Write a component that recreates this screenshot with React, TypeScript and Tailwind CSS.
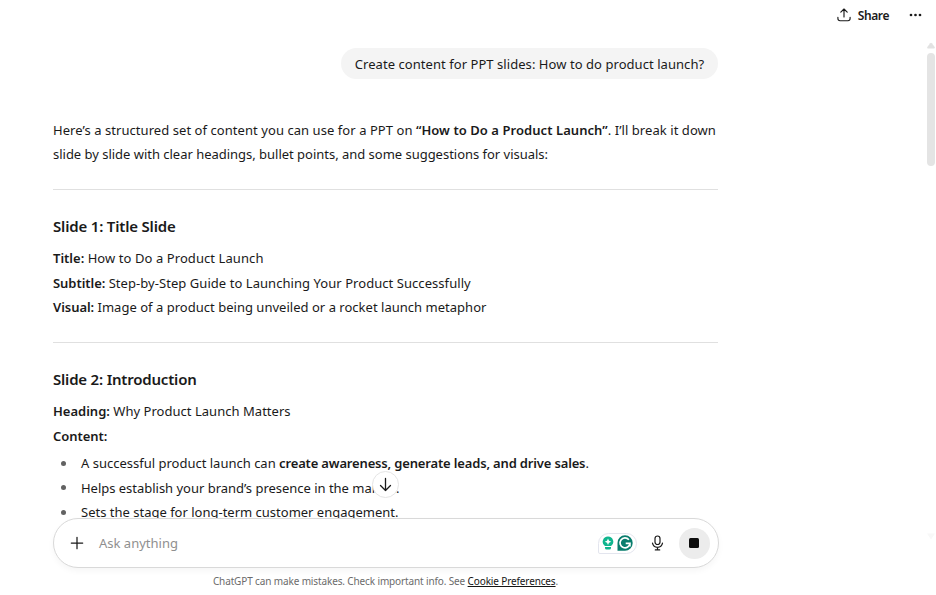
import type { ReactNode } from "react";

function Line({ children, className = "" }: { children: ReactNode; className?: string }) {
  return <div className={`h-[24.3px] whitespace-nowrap leading-[24.3px] ${className}`}>{children}</div>;
}

function B({ children, className = "" }: { children: ReactNode; className?: string }) {
  return <strong className={`font-semibold ${className}`}>{children}</strong>;
}

function Bullet({ children, className = "" }: { children: ReactNode; className?: string }) {
  return (
    <li className="flex h-[24.3px] items-center whitespace-nowrap leading-[24.3px]">
      <span className="ml-[8px] mr-[15px] size-[5px] shrink-0 rounded-full bg-[#626262]" />
      <span className={className}>{children}</span>
    </li>
  );
}

function Header() {
  return (
    <header className="flex h-[30px] shrink-0 items-center justify-end pr-[13px]">
      <button className="flex items-center text-[12px] font-semibold tracking-[-0.4px]">
        <svg className="mr-[7px]" width="14" height="14" viewBox="0 0 14 14" fill="none" stroke="currentColor" strokeWidth="1.15" strokeLinecap="round" strokeLinejoin="round">
          <path d="M7 9V1M3.8 4.2 7 1l3.2 3.2M.9 9.3v1.2c0 1.4.8 2.2 2.2 2.2h7.8c1.4 0 2.2-.8 2.2-2.2V9.3" />
        </svg>
        <span className="pt-px">Share</span>
      </button>
      <svg className="ml-[19px]" width="15" height="14" viewBox="0 0 15 14" fill="currentColor">
        <circle cx="3" cy="7" r="1.35" />
        <circle cx="7.5" cy="7" r="1.35" />
        <circle cx="12" cy="7" r="1.35" />
      </svg>
    </header>
  );
}

function Composer() {
  return (
    <div className="flex h-[50px] w-[666px] items-center rounded-full border border-[#d9d9d9] bg-white pl-[16px] pr-[8px] shadow-[0_3px_6px_rgba(0,0,0,0.04)]">
      <svg width="14" height="14" viewBox="0 0 14 14" fill="none" stroke="currentColor" strokeWidth="1.25" strokeLinecap="round">
        <path d="M7 1.3v11.4M1.3 7h11.4" />
      </svg>
      <span className="ml-[15.5px] pt-[2px] text-[13px] text-[#8f8f8f]">Ask anything</span>
      <div className="ml-auto flex h-[21px] w-[39px] items-center justify-center gap-[3px] rounded-[11px] rounded-bl-[2px] border border-[#e3e5ee]">
        <svg width="12" height="14" viewBox="0 0 12 14">
          <path fill="#0fb58e" d="M6 .5a5.3 5.3 0 0 0-3.1 9.6h6.2A5.3 5.3 0 0 0 6 .5M3 11h6v1q0 1.6-1.6 1.6H4.6Q3 13.6 3 12z" />
          <path fill="#fff" d="m6 2.4 1 2.3 2.3 1-2.3 1L6 9 5 6.7l-2.3-1 2.3-1z" />
        </svg>
        <svg width="16" height="16" viewBox="0 0 16 16">
          <path fill="#087d6d" d="M8 .3a7.7 7.7 0 1 1 0 15.4H.5V8A7.6 7.6 0 0 1 8 .3" />
          <path fill="none" stroke="#fff" strokeWidth="1.7" d="M11.9 4.7A5 5 0 1 0 13 8.3H8.7M12.9 8.3v3.2" />
        </svg>
      </div>
      <svg className="ml-[14px]" width="13" height="16" viewBox="0 0 13 16" fill="none" stroke="currentColor" strokeWidth="1.2" strokeLinecap="round">
        <rect x="4" y="1" width="5" height="8.5" rx="2.5" />
        <path d="M1.5 8.2a5.1 5.1 0 0 0 10 0M6.5 12.3v2.5M4.3 14.9h4.4" />
      </svg>
      <button aria-label="Stop" className="ml-[15px] flex size-[31px] items-center justify-center rounded-full bg-[#ececec]">
        <span className="size-[10px] rounded-[1.5px] bg-[#0d0d0d]" />
      </button>
    </div>
  );
}

export default function App() {
  return (
    <div className="relative flex h-[595px] w-[936px] flex-col overflow-hidden bg-white font-['Noto_Sans',sans-serif] text-[13px] text-[#1a1a1a]">
      <Header />
      <main className="h-[488px] shrink-0 overflow-hidden pl-[53px]">
        <div className="w-[665px]">
          <div className="mt-[18px] flex justify-end">
            <div className="flex h-[31px] w-[377px] items-center justify-center whitespace-nowrap rounded-full bg-[#f4f4f4]">
              <span className="pt-[2px] tracking-[0.055px]">Create content for PPT slides: How to do product launch?</span>
            </div>
          </div>
          <div className="mt-[38.7px]">
            <Line className="tracking-[0.06px]">Here’s a structured set of content you can use for a PPT on <B>“How to Do a Product Launch”</B>. I’ll break it down</Line>
            <Line className="tracking-[-0.02px]">slide by slide with clear headings, bullet points, and some suggestions for visuals:</Line>
          </div>
          <hr className="mt-[22.7px] border-[#e0e0e0]" />
          <h3 className="mt-[24px] h-[24px] whitespace-nowrap text-[15px] font-semibold leading-[24px] tracking-[-0.18px]">Slide 1: Title Slide</h3>
          <div className="mt-[8.4px]">
            <Line><B>Title:</B> <span className="tracking-[0.08px]">How to Do a Product Launch</span></Line>
            <Line><B className="tracking-[-0.05px]">Subtitle:</B> <span className="tracking-[0.055px]">Step-by-Step Guide to Launching Your Product Successfully</span></Line>
            <Line><B className="tracking-[-0.05px]">Visual:</B> <span className="tracking-[0.02px]">Image of a product being unveiled or a rocket launch metaphor</span></Line>
          </div>
          <hr className="mt-[23.2px] border-[#e0e0e0]" />
          <h3 className="mt-[24px] h-[24px] whitespace-nowrap text-[15px] font-semibold leading-[24px] tracking-[-0.2px]">Slide 2: Introduction</h3>
          <div className="mt-[8px]">
            <Line><B>Heading:</B> <span className="tracking-[0.03px]">Why Product Launch Matters</span></Line>
            <Line><B className="tracking-[-0.05px]">Content:</B></Line>
          </div>
          <ul className="mt-[3.4px]">
            <Bullet><span>A successful product launch can </span><B className="tracking-[-0.16px]">create awareness, generate leads, and drive sales</B>.</Bullet>
            <Bullet className="tracking-[-0.02px]">Helps establish your brand’s presence in the market.</Bullet>
            <Bullet>Sets the stage for long-term customer engagement.</Bullet>
          </ul>
        </div>
      </main>
      <footer className="flex w-[771px] flex-col items-center">
        <Composer />
        <p className="mt-[5px] whitespace-nowrap text-[10px] leading-[16px] tracking-[-0.13px] text-[#6b6b6b]">
          ChatGPT can make mistakes. Check important info. See <span className="text-[#151515] underline">Cookie Preferences</span>.
        </p>
      </footer>
      <button aria-label="Scroll to bottom" className="absolute left-[372px] top-[471px] flex size-[27px] items-center justify-center rounded-full border border-[#e5e5e5] bg-white">
        <svg width="13" height="15" viewBox="0 0 13 15" fill="none" stroke="currentColor" strokeWidth="1.3" strokeLinecap="round" strokeLinejoin="round">
          <path d="M6.5 1.5v12M1.5 8.5l5 5 5-5" />
        </svg>
      </button>
      <div className="absolute right-0 top-[42px] flex h-[498px] w-[10px] flex-col items-center">
        <svg width="8" height="7" viewBox="0 0 8 7" fill="#e2e2e2"><path d="M3.2 1.2q.8-1 1.6 0L7.7 5q.6 1.4-.7 1.5H1Q-.3 6.4.3 5z" /></svg>
        <div className="mt-[4px] h-[113px] w-[8px] rounded-full bg-[#e4e4e4]" />
        <svg className="mt-auto" width="8" height="7" viewBox="0 0 8 7" fill="#f8f8f8"><path d="M0 .5h8L4 6.5z" /></svg>
      </div>
    </div>
  );
}
